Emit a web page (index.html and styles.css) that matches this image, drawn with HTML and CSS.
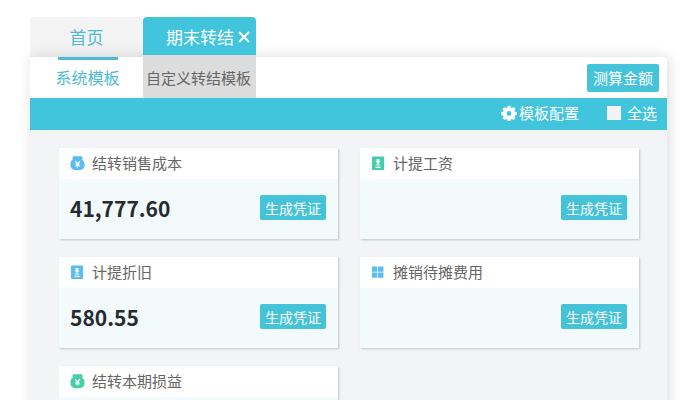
FILE: index.html
```html
<!DOCTYPE html>
<html lang="zh-CN">
<head>
<meta charset="utf-8">
<meta name="viewport" content="width=device-width, initial-scale=1">
<title>期末转结</title>
<link rel="stylesheet" href="styles.css">
</head>
<body>
<svg class="sprite" aria-hidden="true">
  <symbol id="bag" viewBox="0 0 16 16">
    <path fill="currentColor" d="M3.600 1Q4.200.1 5.200.6l1.200.5L8 .4l1.600.7 1.200-.5q1-.5 1.600.4l1.100 1.400q.4.700-.2 1.200l-.7.600q3 2 3 6Q15.600 15.600 9.500 15.600h-3Q.4 15.600.4 9.800q0-4 3-6l-.7-.6q-.6-.5-.2-1.200z"/>
    <path fill="none" stroke="#fff" stroke-width="1.200" d="M5.400 6 8 8.800 10.600 6M8 8.800v4M5.800 9.200h4.400M5.800 11h4.400"/>
  </symbol>
  <symbol id="slip" viewBox="0 0 16 16">
    <rect fill="currentColor" x="1" y="1" width="13" height="14.500" rx="1"/>
    <path fill="#fff" d="M6 3.800h3v2.700h1.200L7.500 9.200 4.800 6.500H6zM5 9.600h5v1H5zM4.800 12h5.400v1.200H4.800z"/>
  </symbol>
  <symbol id="grid" viewBox="0 0 16 16">
    <path fill="currentColor" d="M1 2h5.700v5.700H1zM7.500 2h5.700v5.700H7.500zM1 8.500h5.700v5.500H1zM7.500 8.500h5.700v5.500H7.500z"/>
  </symbol>
</svg>
<div class="page">
  <nav class="tabs">
    <a class="tab" href="#home">首页</a>
    <div class="tab tab-active">
      <a href="#closing">期末转结</a>
      <button class="close" type="button" aria-label="关闭">
        <svg viewBox="0 0 12 12"><path d="M1 1l10 10M11 1L1 11"/></svg>
      </button>
    </div>
  </nav>
  <main class="panel">
    <div class="subtabs">
      <a class="subtab subtab-active" href="#system">系统模板</a>
      <a class="subtab subtab-custom" href="#custom">自定义转结模板</a>
      <button class="btn btn-estimate" type="button">测算金额</button>
    </div>
    <div class="toolbar">
      <button class="config" type="button">
        <svg viewBox="0 0 16 16"><path fill-rule="evenodd" d="M6.500.8h3l.4 2 1 .4 1.700-1.100 2 2-1.100 1.700.4 1 1.900.3v2.900l-1.900.4-.4 1 1.100 1.700-2 2-1.700-1.100-1 .4-.4 1.800h-3l-.4-1.800-1-.4-1.700 1.100-2-2 1.100-1.700-.4-1-1.900-.4V7.100l1.900-.3.4-1L1.400 4.100l2-2 1.700 1.100 1-.4zM8 6a2.400 2.400 0 1 0 0 4.800A2.400 2.400 0 0 0 8 6z"/></svg>
        <span>模板配置</span>
      </button>
      <label class="select-all"><input type="checkbox"><span>全选</span></label>
    </div>
    <div class="cards">
      <section class="card">
        <h2 class="card-head"><svg class="icon blue"><use href="#bag"/></svg>结转销售成本</h2>
        <div class="card-body"><strong class="amount">41,777.60</strong><button class="btn btn-voucher" type="button">生成凭证</button></div>
      </section>
      <section class="card">
        <h2 class="card-head"><svg class="icon green"><use href="#slip"/></svg>计提工资</h2>
        <div class="card-body"><button class="btn btn-voucher" type="button">生成凭证</button></div>
      </section>
      <section class="card">
        <h2 class="card-head"><svg class="icon blue"><use href="#slip"/></svg>计提折旧</h2>
        <div class="card-body"><strong class="amount">580.55</strong><button class="btn btn-voucher" type="button">生成凭证</button></div>
      </section>
      <section class="card">
        <h2 class="card-head"><svg class="icon blue"><use href="#grid"/></svg>摊销待摊费用</h2>
        <div class="card-body"><button class="btn btn-voucher" type="button">生成凭证</button></div>
      </section>
      <section class="card">
        <h2 class="card-head"><svg class="icon green"><use href="#bag"/></svg>结转本期损益</h2>
        <div class="card-body"></div>
      </section>
    </div>
  </main>
</div>
</body>
</html>
```
FILE: styles.css
```css
* {
  box-sizing: border-box;
}

body {
  margin: 0;
  background: #fff;
  color: #666;
  font-family: "Noto Sans CJK SC", sans-serif;
  font-size: 15px;
  line-height: 20px;
}

a {
  color: inherit;
  text-decoration: none;
}

button {
  margin: 0;
  padding: 0;
  border: 0;
  background: none;
  color: inherit;
  font: inherit;
  cursor: pointer;
}

.sprite {
  display: none;
}

.page {
  display: flex;
  flex-direction: column;
  height: 100vh;
  padding: 17px 30px 0;
  overflow: hidden;
}

.tabs {
  display: flex;
}

.tab {
  display: flex;
  align-items: center;
  justify-content: center;
  width: 113px;
  height: 40px;
  border-radius: 4px 4px 0 0;
  background: #f3f3f3;
  color: #4dbcd2;
  font-size: 17px;
}

.tab-active {
  position: relative;
  justify-content: flex-end;
  gap: 4px;
  padding-right: 6px;
  background: linear-gradient(#40c5dc 38px, #dcdcdc 38px);
  color: #fff;
}

.close {
  display: flex;
}

.close svg {
  width: 12px;
  height: 12px;
  fill: none;
  stroke: currentColor;
  stroke-width: 2;
}

.panel {
  flex: 1 0 auto;
  border-radius: 0 4px 0 0;
  background: #f2f4f6;
  box-shadow: 2px 0 14px rgba(0, 0, 0, 0.14);
}

.subtabs {
  display: flex;
  align-items: center;
  height: 41px;
  padding-right: 8px;
  border-top-right-radius: 4px;
  background: #fff;
}

.subtab {
  display: flex;
  align-items: center;
  justify-content: center;
  width: 113px;
  height: 41px;
  white-space: nowrap;
}

.subtab-active {
  flex-direction: column;
  justify-content: flex-start;
  gap: 7px;
  padding-left: 2px;
  color: #4dbcd2;
  font-size: 16px;
}

.subtab-active::before {
  width: 60px;
  height: 3px;
  background: #4dbcd2;
  content: "";
}

.subtab-custom {
  padding-right: 2px;
  background: #dcdcdc;
}

.btn {
  margin-left: auto;
  border-radius: 2px;
  background: #44c3d9;
  color: #fff;
}

.btn-estimate {
  padding: 4px 6px;
}

.toolbar {
  display: flex;
  align-items: center;
  justify-content: flex-end;
  gap: 28px;
  height: 32px;
  padding: 0 10px 2px 0;
  background: #40c5dc;
  color: #fff;
}

.config {
  display: flex;
  align-items: center;
  gap: 2px;
}

.config svg {
  width: 16px;
  height: 16px;
  fill: currentColor;
}

.select-all {
  display: flex;
  align-items: center;
  gap: 6px;
}

.select-all input {
  width: 14px;
  height: 14px;
  margin: 0;
  appearance: none;
  background: #f3f3f3;
}

.select-all input:checked {
  border: 3px solid #f3f3f3;
  background: #2a9fb5;
}

.cards {
  display: grid;
  grid-template-columns: 1fr 1fr;
  gap: 18px 22px;
  padding: 18px 28px 18px 29px;
}

.card {
  background: #fff;
  box-shadow: 1px 1px 2px rgba(0, 0, 0, 0.2);
}

.card-head {
  display: flex;
  align-items: center;
  gap: 7px;
  height: 31px;
  margin: 0;
  padding: 0 0 2px 11px;
  font-size: 15px;
  font-weight: 400;
}

.icon {
  width: 15px;
  height: 16px;
}

.blue {
  color: #5abcf0;
}

.green {
  color: #45ceaa;
}

.card-body {
  display: flex;
  align-items: center;
  height: 60px;
  padding: 0 12px 3px 11px;
  background: #f3fafc;
}

.amount {
  color: #262b30;
  font-size: 21px;
  font-weight: 700;
}

.btn-voucher {
  height: 25px;
  padding: 0 5px;
  font-size: 14px;
}
```
